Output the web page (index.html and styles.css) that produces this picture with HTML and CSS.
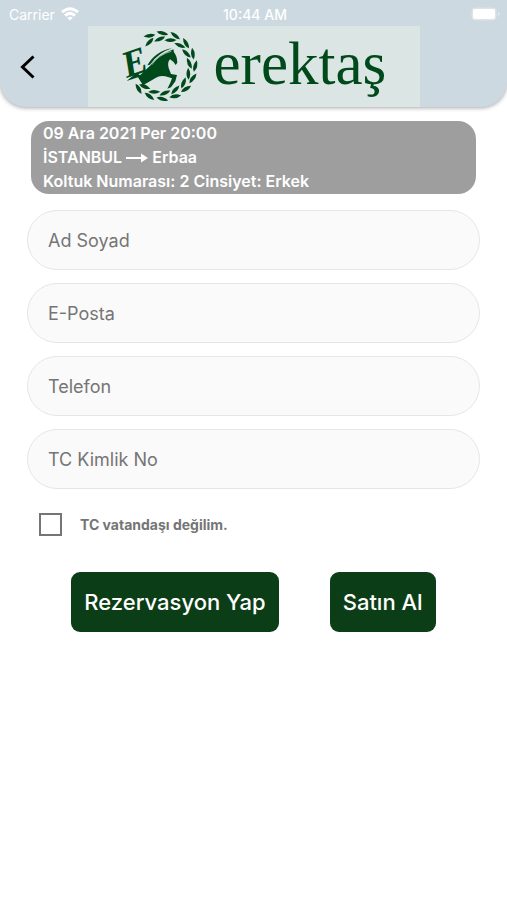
FILE: index.html
```
<!doctype html>
<html lang="tr">
<head>
<meta charset="utf-8">
<meta name="viewport" content="width=device-width, initial-scale=1">
<title>Erektaş</title>
<link rel="stylesheet" href="styles.css">
</head>

<body>
<header class="header">
	<div class="status">
		<div class="carrier">
			<span>Carrier</span>
			<svg width="18" height="14" viewBox="0 0 18 14" fill="none" stroke="#fff" stroke-width="3">
				<path d="M1 5.2Q9-1.8 17 5.2"/>
				<path d="M4 8.6Q9 4.2 14 8.6"/>
				<path d="M9 13.5L6.2 10.7Q9 8.6 11.8 10.7Z" fill="#fff" stroke="none"/>
			</svg>
		</div>
		<span class="time">10:44 AM</span>
		<div class="battery">
			<svg width="30" height="14" viewBox="0 0 30 14" fill="#fff">
				<rect x="0.5" y="0.5" width="25" height="13" rx="4" fill-opacity=".3"/>
				<rect x="2" y="2" width="22" height="10" rx="2"/>
				<path d="M27 5Q30 7 27 9Z" fill-opacity=".5"/>
			</svg>
		</div>
	</div>
	<div class="navbar">
		<button class="back" type="button" aria-label="Geri">
			<svg width="16" height="24" viewBox="0 0 16 24" fill="none" stroke="#000" stroke-width="3"><path d="M13.500 1.500L2.500 12L13.500 22.500"/></svg>
		</button>
		<div class="logo">
			<svg class="emblem" width="90" height="81" viewBox="0 12 270 243" fill="#00491a">
				<defs>
					<path id="leaf" d="M0 18Q-12 3 0-18Q11 0 0 18Z"/>
					<g id="pair">
						<use href="#leaf" transform="translate(99 0) rotate(14)"/>
						<use href="#leaf" transform="translate(81 -8) rotate(-24)"/>
					</g>
				</defs>
				<!-- defne dalı -->
				<g transform="translate(157 132)">
					<use href="#pair" transform="rotate(-113)"/>
					<use href="#pair" transform="rotate(-90)"/>
					<use href="#pair" transform="rotate(-67)"/>
					<use href="#pair" transform="rotate(-44)"/>
					<use href="#pair" transform="rotate(-22)"/>
					<use href="#pair"/>
					<use href="#pair" transform="rotate(22)"/>
					<use href="#pair" transform="rotate(44)"/>
					<use href="#pair" transform="rotate(67)"/>
					<use href="#pair" transform="rotate(90)"/>
					<use href="#pair" transform="rotate(113)"/>
					<use href="#pair" transform="rotate(136)"/>
				</g>
				<!-- at -->
				<path d="M50 177L80 152L90 160L122 130Q140 106 164 94L190 82L192 91Q201 102 202 122L197 129L190 119L180 112Q171 122 176 138L183 156L201 159L196 178L183 196L172 200L181 182L186 169L166 163Q148 160 138 167L99 190L84 166Z"/>
				<path d="M112 130Q138 86 186 79Q145 92 120 128Z"/>
				<path d="M126 128Q145 98 184 88" fill="none" stroke="#dae5e4" stroke-width="2"/>
				<text class="initial" x="50" y="168" transform="rotate(-19 50 168)">E</text>
			</svg>
			<span class="brand">erektaş</span>
		</div>
	</div>
</header>

<main class="main">
	<div class="trip">
		<p>09 Ara 2021 Per 20:00</p>
		<p>İSTANBUL
			<svg width="22" height="10" viewBox="0 0 22 10" fill="#fff"><path d="M0 4H15V0.500L22 5L15 9.500V6H0Z"/></svg>
			Erbaa</p>
		<p>Koltuk Numarası: 2 Cinsiyet: Erkek</p>
	</div>

	<form class="form">
		<input class="field" type="text" placeholder="Ad Soyad" aria-label="Ad Soyad">
		<input class="field" type="email" placeholder="E-Posta" aria-label="E-Posta">
		<input class="field" type="tel" placeholder="Telefon" aria-label="Telefon">
		<input class="field" type="text" placeholder="TC Kimlik No" aria-label="TC Kimlik No">

		<div class="check">
			<input type="checkbox" id="foreign">
			<label for="foreign">TC vatandaşı değilim.</label>
		</div>

		<div class="actions">
			<button class="btn" type="button">Rezervasyon Yap</button>
			<button class="btn" type="button">Satın Al</button>
		</div>
	</form>
</main>
</body>
</html>
```
FILE: styles.css
```
*{ margin:0; padding:0; box-sizing:border-box}
body{ background:#fff; font-family:Inter,"Liberation Sans",sans-serif;}
svg{ display:block}

.header{ background:#cdd9e0; border-radius:0 0 26px 26px; box-shadow:0 1px 4px rgba(0,0,0,.35);}
.status{ display:grid; grid-template-columns:1fr auto 1fr; align-items:center; height:26px; padding:2px 6px 0 9px; color:#fff; font-size:14px;}
.carrier{ display:flex; align-items:center; gap:6px}
.time{ font-weight:500}
.battery{ display:flex; justify-content:flex-end}

.navbar{ display:grid; grid-template-columns:1fr auto 1fr; align-items:center;}
.back{ justify-self:start; padding:8px 20px; border:0; background:none; cursor:pointer;}
.logo{ display:flex; align-items:center; gap:14px; width:332px; height:81px; padding-left:22px; background:#dae5e4;}
.emblem{ overflow:visible}
.brand{ padding-bottom:6px; color:#00491a; font-family:"Liberation Serif",serif; font-size:61px; line-height:64px;}
.initial{ font-family:"Liberation Serif",serif; font-size:112px; font-style:italic; font-weight:bold;}

.main{ padding:14px 27px}
.trip{ margin:0 4px 16px; padding:0 12px 1px; border-radius:18px; background:#9e9e9e; color:#fff; font-size:16px; font-weight:600; line-height:24px;}
.trip svg{ display:inline-block}

.form{ display:flex; flex-direction:column; gap:13px}
.field{ width:100%; height:60px; padding:0 20px; border:1px solid #e6e6e6; border-radius:30px; background:#fafafa; color:#333; font-family:inherit; font-size:18px;}
.field::placeholder{ color:#757575}

.check{ display:flex; align-items:center; gap:18px; padding:11px 12px; color:#757575; font-size:14px; font-weight:700;}
.check input{ appearance:none; width:23px; height:23px; border:2px solid #757575; background:#fff;}
.check input:checked{ background:#0b3d17}

.actions{ display:flex; justify-content:center; gap:51px; margin-top:12px}
.btn{ height:60px; padding:0 13px; border:0; border-radius:9px; background:#0b3d17; color:#fff; font-family:inherit; font-size:22px; font-weight:500; cursor:pointer;}
```
